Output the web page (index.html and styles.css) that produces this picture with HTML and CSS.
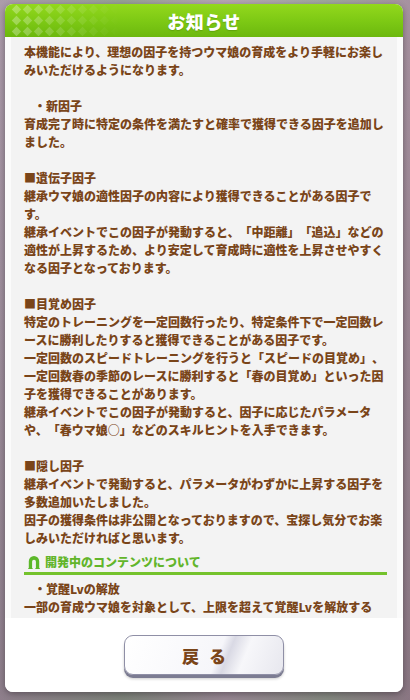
FILE: index.html
```html
<!DOCTYPE html>
<html lang="ja">
    <head>
        <meta charset="UTF-8" />
        <meta name="viewport" content="width=device-width, initial-scale=1.0" />
        <title>お知らせ</title>
        <link rel="stylesheet" href="styles.css">
    </head>
    <body>
        <div class="dialog">
            <!-- タイトルバー -->
            <header class="dlg-head">
                <svg class="deco" width="110" height="33" viewBox="0 0 110 33">
                    <defs>
                        <pattern id="dia" width="11" height="11" patternUnits="userSpaceOnUse">
                            <path d="M5.5 0.8 L10.2 5.5 L5.5 10.2 L0.8 5.5Z" fill="#fff" />
                        </pattern>
                        <linearGradient id="fade" x1="0" x2="1" y1="0" y2="0">
                            <stop offset="0" stop-color="#fff" stop-opacity=".3" />
                            <stop offset=".55" stop-color="#fff" stop-opacity=".12" />
                            <stop offset="1" stop-color="#fff" stop-opacity="0" />
                        </linearGradient>
                        <mask id="m">
                            <rect width="110" height="33" fill="url(#fade)" />
                        </mask>
                    </defs>
                    <rect width="110" height="33" fill="url(#dia)" mask="url(#m)" />
                </svg>
                <h1>お知らせ</h1>
            </header>

            <!-- 本文 -->
            <div class="dlg-body">
                <p>本機能により、理想の因子を持つウマ娘の育成をより手軽にお楽しみいただけるようになります。</p>
                <p class="gap"></p>
                <p class="ind">・新因子</p>
                <p>育成完了時に特定の条件を満たすと確率で獲得できる因子を追加しました。</p>
                <p class="gap"></p>
                <p>■遺伝子因子</p>
                <p>継承ウマ娘の適性因子の内容により獲得できることがある因子です。</p>
                <p>継承イベントでこの因子が発動すると、「中距離」「追込」などの適性が上昇するため、より安定して育成時に適性を上昇させやすくなる因子となっております。</p>
                <p class="gap"></p>
                <p>■目覚め因子</p>
                <p>特定のトレーニングを一定回数行ったり、特定条件下で一定回数レースに勝利したりすると獲得できることがある因子です。</p>
                <p>一定回数のスピードトレーニングを行うと「スピードの目覚め」、一定回数春の季節のレースに勝利すると「春の目覚め」といった因子を獲得できることがあります。</p>
                <p>継承イベントでこの因子が発動すると、因子に応じたパラメータや、「春ウマ娘○」などのスキルヒントを入手できます。</p>
                <p class="gap"></p>
                <p>■隠し因子</p>
                <p>継承イベントで発動すると、パラメータがわずかに上昇する因子を多数追加いたしました。</p>
                <p>因子の獲得条件は非公開となっておりますので、宝探し気分でお楽しみいただければと思います。</p>

                <h2 class="sec">
                    <svg class="shoe" width="12" height="14" viewBox="0 0 12 14">
                        <path d="M0.8 13.5 V6.2 A5.2 5.2 0 0 1 11.2 6.2 V13.5 H7.9 V6.6 A1.9 1.9 0 0 0 4.1 6.6 V13.5 Z" fill="#5cb82a" />
                        <path d="M0.3 13.6 H4.6 M7.4 13.6 H11.7" stroke="#5cb82a" stroke-width="1.2" />
                    </svg>
                    開発中のコンテンツについて
                </h2>
                <p class="ind">・覚醒Lvの解放</p>
                <p>一部の育成ウマ娘を対象として、上限を超えて覚醒Lvを解放する</p>
            </div>

            <!-- 戻るボタン -->
            <footer class="dlg-foot">
                <a href="#" class="btn-back">戻る</a>
            </footer>
        </div>
    </body>
</html>
```

FILE: styles.css
```css
html,
body {
    margin: 0px;
    padding: 0px;
    width: 100%;
    height: 100%;
}

body {
    /* 後ろのぼかし背景 */
    background:
        linear-gradient(180deg, rgba(120, 110, 130, 0.2), rgba(60, 50, 60, 0.35)),
        linear-gradient(90deg, #b9a7b5 0%, #9fae9a 30%, #c7b3c0 55%, #a9b6a3 80%, #b39aa8 100%);
    font-family: "Noto Sans CJK JP", "Noto Sans", sans-serif;
    overflow: hidden;
}

p,
h1,
h2 {
    margin: 0px;
    padding: 0px;
}

/* ダイアログ本体 */
.dialog {
    display: flex;
    flex-direction: column;
    width: 398px;
    height: 688px;
    margin: 4px 0 0 5px;
    background: #fbfbfb;
    border-radius: 8px;
    box-shadow: 0 2px 6px rgba(40, 30, 40, 0.45);
    overflow: hidden;
}

/* タイトルバー */
.dlg-head {
    position: relative;
    flex-shrink: 0;
    height: 33px;
    display: flex;
    align-items: center;
    justify-content: center;
    background: linear-gradient(180deg, #93d81c 0%, #7cc814 55%, #6cb80e 100%);
}

.dlg-head .deco {
    position: absolute;
    top: 0;
    left: 6px;
}

.dlg-head h1 {
    position: relative;
    color: #fff;
    font-size: 18px;
    font-weight: 900;
    letter-spacing: 0.5px;
    text-shadow: 0 1px 1px rgba(60, 110, 0, 0.35);
}

/* 本文エリア */
.dlg-body {
    flex: 1;
    margin: 0 6px;
    padding: 6px 10px 0 13px;
    background: #f3f3f3;
    overflow: hidden;
    color: #7a4519;
    font-size: 12px;
    font-weight: 900;
    line-height: 18px;
    /* 「」が詰まらないように */
    text-spacing-trim: space-all;
}

.dlg-body .gap {
    height: 18px;
}

.dlg-body .ind {
    padding-left: 10px;
}

/* 見出し */
.sec {
    display: flex;
    align-items: center;
    gap: 5px;
    margin-top: 6px;
    margin-bottom: 5px;
    padding: 0 0 1px 4px;
    border-bottom: 3px solid #74c22c;
    color: #62b52a;
    font-size: 12px;
    font-weight: 900;
    line-height: 18px;
}

.sec .shoe {
    flex-shrink: 0;
}

/* フッター */
.dlg-foot {
    flex-shrink: 0;
    height: 74px;
    display: flex;
    justify-content: center;
    padding-top: 17px;
    box-sizing: border-box;
    background: #fff;
}

.btn-back {
    display: flex;
    align-items: center;
    justify-content: center;
    width: 160px;
    height: 40px;
    box-sizing: border-box;
    border: 1.5px solid #8f8fa6;
    border-radius: 9px;
    background: linear-gradient(112deg, #ffffff 0%, #f6f6fa 58%, #d9d9e4 64%, #f7f7fa 74%, #e7e7ee 100%);
    box-shadow: 0 3px 0 #7c7c92, 0 4px 3px rgba(0, 0, 0, 0.2);
    color: #7a4519;
    font-size: 17px;
    font-weight: 900;
    letter-spacing: 10px;
    text-indent: 10px;
    text-decoration: none;
}
```
